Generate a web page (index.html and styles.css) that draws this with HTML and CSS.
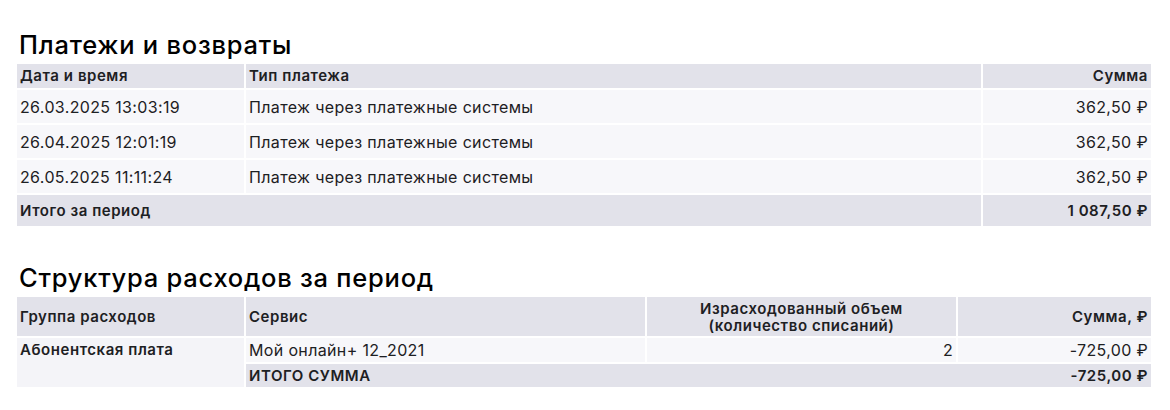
FILE: index.html
```html
<!DOCTYPE html>
<html lang="ru">
<head>
<meta charset="utf-8">
<title>Отчёт</title>
<link rel="stylesheet" href="styles.css">
</head>
<body>
<main class="page">
  <section class="section section-payments">
    <h2 class="title">Платежи и возвраты</h2>
    <table class="tbl tbl-payments">
      <colgroup>
        <col class="c-date">
        <col>
        <col class="c-sum">
      </colgroup>
      <thead>
        <tr class="row-head">
          <th class="left">Дата и время</th>
          <th class="left">Тип платежа</th>
          <th class="right">Сумма</th>
        </tr>
      </thead>
      <tbody>
        <tr class="row-data">
          <td>26.03.2025 13:03:19</td>
          <td>Платеж через платежные системы</td>
          <td class="right">362,50 ₽</td>
        </tr>
        <tr class="row-data">
          <td>26.04.2025 12:01:19</td>
          <td>Платеж через платежные системы</td>
          <td class="right">362,50 ₽</td>
        </tr>
        <tr class="row-data">
          <td>26.05.2025 11:11:24</td>
          <td>Платеж через платежные системы</td>
          <td class="right">362,50 ₽</td>
        </tr>
        <tr class="row-total">
          <td colspan="2">Итого за период</td>
          <td class="right">1 087,50 ₽</td>
        </tr>
      </tbody>
    </table>
  </section>

  <section class="section section-costs">
    <h2 class="title">Структура расходов за период</h2>
    <table class="tbl tbl-costs">
      <colgroup>
        <col class="c-group">
        <col class="c-service">
        <col class="c-volume">
        <col>
      </colgroup>
      <thead>
        <tr class="row-head2">
          <th class="left">Группа расходов</th>
          <th class="left">Сервис</th>
          <th class="center">Израсходованный объем<br>(количество списаний)</th>
          <th class="right">Сумма, ₽</th>
        </tr>
      </thead>
      <tbody>
        <tr class="row-data2">
          <td rowspan="2" class="group-cell">Абонентская плата</td>
          <td>Мой онлайн+ 12_2021</td>
          <td class="right">2</td>
          <td class="right">-725,00 ₽</td>
        </tr>
        <tr class="row-total2">
          <td colspan="3">
            <div class="total-line">
              <span>ИТОГО СУММА</span>
              <span>-725,00 ₽</span>
            </div>
          </td>
        </tr>
      </tbody>
    </table>
  </section>
</main>
</body>
</html>
```

FILE: styles.css
```css
* { box-sizing: border-box; }

html, body {
  margin: 0;
  padding: 0;
  background: #ffffff;
}

body {
  font-family: "Inter", "Noto Sans", "Liberation Sans", sans-serif;
  color: #1d2023;
  font-size: 16px;
}

.page {
  padding: 30px 17px 0 15px;
  display: flex;
  flex-direction: column;
}

.section-costs {
  margin-top: 35px;
}

.title {
  margin: 0 0 2px 4px;
  font-size: 25.5px;
  line-height: 30px;
  font-weight: 500;
  color: #000000;
  letter-spacing: 0.75px;
}

.tbl {
  width: 100%;
  border-collapse: separate;
  border-spacing: 2px;
  table-layout: fixed;
}

.tbl th,
.tbl td {
  padding: 0 3px;
  line-height: 18px;
  white-space: nowrap;
  letter-spacing: 0.35px;
}

.tbl th {
  font-weight: 600;
  background: #e2e2ea;
  font-size: 15px;
  letter-spacing: 0.55px;
}

.left { text-align: left; }
.right { text-align: right; }
.center { text-align: center; }

.c-date { width: 227px; }
.c-sum { width: 168px; }

.row-head th { height: 24px; }

.row-data td {
  height: 33px;
  background: #f7f7fa;
}

.row-total td {
  height: 31px;
  background: #e2e2ea;
  font-weight: 600;
  font-size: 15px;
  letter-spacing: 0.55px;
}

.c-group { width: 227px; }
.c-service { width: 399px; }
.c-volume { width: 309px; }

.row-head2 th {
  height: 39px;
  line-height: 17px;
}

.row-data2 td {
  height: 24px;
  background: #f7f7fa;
}

.group-cell {
  vertical-align: top;
  padding-top: 3px !important;
  font-weight: 600;
  font-size: 15px;
  letter-spacing: 0.55px !important;
  background: #f4f4f8 !important;
}

.row-total2 td {
  height: 23px;
  background: #e2e2ea;
  font-weight: 600;
  font-size: 15px;
  letter-spacing: 0.55px;
}

.total-line {
  display: flex;
  justify-content: space-between;
}
```
